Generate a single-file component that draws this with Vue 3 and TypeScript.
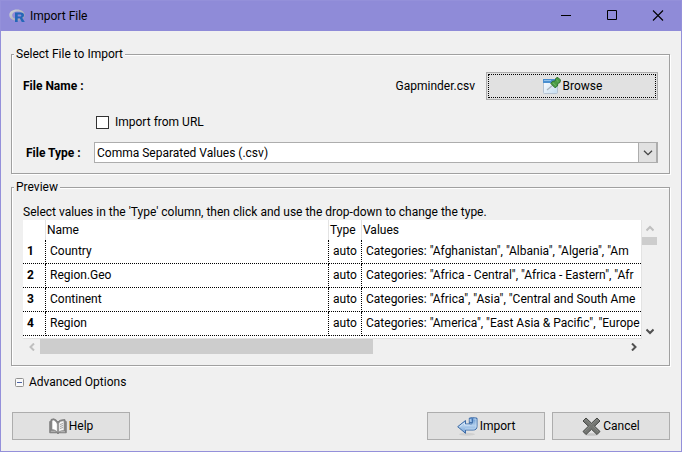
<script setup lang="ts">
import { ref } from 'vue'

interface Variable {
  name: string
  type: string
  values: string
}

const fromUrl = ref(false)
const fileType = ref('Comma Separated Values (.csv)')

const variables: Variable[] = [
  { name: 'Country', type: 'auto', values: 'Categories: "Afghanistan", "Albania", "Algeria", "Am' },
  { name: 'Region.Geo', type: 'auto', values: 'Categories: "Africa - Central", "Africa - Eastern", "Afr' },
  { name: 'Continent', type: 'auto', values: 'Categories: "Africa", "Asia", "Central and South Ame' },
  { name: 'Region', type: 'auto', values: 'Categories: "America", "East Asia & Pacific", "Europe' },
]
</script>

<template>
  <div class="window">
    <header class="titlebar">
      <svg class="logo" width="16" height="14" viewBox="0 0 16 14" aria-hidden="true">
        <defs>
          <linearGradient id="ring" x1="0" y1="0" x2="1" y2="1">
            <stop offset="0" stop-color="#d3d5da" />
            <stop offset="1" stop-color="#9a9da8" />
          </linearGradient>
        </defs>
        <path fill="url(#ring)" fill-rule="evenodd" d="M8 0.5C12.4 0.5 15.6 2.9 15.6 6S12.4 11.7 8 11.7 0.3 9.200 0.300 6 3.600 0.500 8 0.500ZM8.800 2.400C5.500 2.400 3.200 4 3.200 6.200S5.500 9.900 8.800 9.900 14 8.400 14 6.200 12 2.400 8.800 2.400Z" />
        <path fill="#2467b8" fill-rule="evenodd" d="M6 3.500H11.500C14 3.500 15 4.600 15 6.200 15 7.500 14.200 8.300 13.200 8.700L15.800 13H12.800L10.800 9.300H8.700V13H6ZM8.700 5.500V7.400H11C11.900 7.400 12.300 7 12.300 6.400S11.900 5.500 11 5.500Z" />
      </svg>
      <h1>Import File</h1>
      <button class="caption" type="button" aria-label="Minimize">
        <svg width="12" height="12" viewBox="0 0 12 12"><path d="M1 5.500H11" stroke="#000" /></svg>
      </button>
      <button class="caption" type="button" aria-label="Maximize">
        <svg width="12" height="12" viewBox="0 0 12 12"><path d="M1.500 0.500H10.500V9.500H1.500Z" fill="none" stroke="#000" /></svg>
      </button>
      <button class="caption" type="button" aria-label="Close">
        <svg width="12" height="12" viewBox="0 0 12 12"><path d="M1 0.500L11 10.500M11 0.500L1 10.500" stroke="#000" stroke-width="1.100" /></svg>
      </button>
    </header>

    <main>
      <fieldset class="source">
        <legend>Select File to Import</legend>
        <div class="row file-row">
          <strong>File Name :</strong>
          <span class="file-name">Gapminder.csv</span>
          <button class="push browse" type="button">
            <svg width="19" height="18" viewBox="0 0 19 18" aria-hidden="true">
              <defs>
                <linearGradient id="sheet" x1="0" y1="0" x2="1" y2="1">
                  <stop offset="0" stop-color="#ffffff" />
                  <stop offset="1" stop-color="#c3dcf1" />
                </linearGradient>
              </defs>
              <rect x="1.500" y="2.500" width="14" height="14" rx="1" fill="url(#sheet)" stroke="#b4c3d2" />
              <path d="M1 2H16V6H1Z" fill="#4a8fd0" />
              <path d="M2 3.500H9" stroke="#8fc0ea" />
              <path d="M5 13L11 8" stroke="#aab4bb" stroke-width="1.200" />
              <path d="M14 1L16 0.500 18.500 3 18 5.500 15.800 6.500 15.500 9 13 10.800 8.800 6.500 10.500 4.300 13 4Z" fill="#4a9c46" stroke="#2b6e2c" stroke-width="0.900" />
              <path d="M14.500 3L16.500 4.800M11 5.800L13.800 8.500" stroke="#7cc070" stroke-width="0.900" />
            </svg>
            <span>Browse</span>
          </button>
        </div>
        <label class="row url-row">
          <input v-model="fromUrl" type="checkbox" />
          <span>Import from URL</span>
        </label>
        <div class="row type-row">
          <label for="file-type">File Type :</label>
          <div class="combo">
            <select id="file-type" v-model="fileType">
              <option>Comma Separated Values (.csv)</option>
            </select>
            <span class="combo-arrow">
              <svg width="10" height="6" viewBox="0 0 10 6" aria-hidden="true"><path d="M1 0.800L5 4.600 9 0.800" fill="none" stroke="#444" stroke-width="1.300" /></svg>
            </span>
          </div>
        </div>
      </fieldset>

      <fieldset class="preview">
        <legend>Preview</legend>
        <p>Select values in the 'Type' column, then click and use the drop-down to change the type.</p>
        <div class="scroller">
          <div class="viewport">
            <table>
              <colgroup>
                <col class="c-index" />
                <col />
                <col class="c-type" />
                <col class="c-values" />
              </colgroup>
              <thead>
                <tr>
                  <th></th>
                  <th>Name</th>
                  <th>Type</th>
                  <th>Values</th>
                </tr>
              </thead>
              <tbody>
                <tr v-for="(v, i) in variables" :key="v.name">
                  <th scope="row">{{ i + 1 }}</th>
                  <td>{{ v.name }}</td>
                  <td>{{ v.type }}</td>
                  <td>{{ v.values }}</td>
                </tr>
              </tbody>
            </table>
          </div>
          <div class="bar vertical">
            <button type="button" aria-label="Scroll up">
              <svg width="8" height="8" viewBox="0 0 8 8"><path d="M0.500 5.500L4 2 7.500 5.500" fill="none" stroke="#bfbfbf" stroke-width="2" /></svg>
            </button>
            <div class="track"><div class="thumb"></div></div>
            <button type="button" aria-label="Scroll down">
              <svg width="8" height="8" viewBox="0 0 8 8"><path d="M0.500 2.500L4 6 7.500 2.500" fill="none" stroke="#505050" stroke-width="2" /></svg>
            </button>
          </div>
          <div class="bar horizontal">
            <button type="button" aria-label="Scroll left">
              <svg width="8" height="8" viewBox="0 0 8 8"><path d="M6 0.500L2.500 4 6 7.500" fill="none" stroke="#bfbfbf" stroke-width="2" /></svg>
            </button>
            <div class="track"><div class="thumb"></div></div>
            <button type="button" aria-label="Scroll right">
              <svg width="8" height="8" viewBox="0 0 8 8"><path d="M2 0.500L5.500 4 2 7.500" fill="none" stroke="#505050" stroke-width="2" /></svg>
            </button>
          </div>
        </div>
      </fieldset>

      <button class="advanced" type="button" aria-expanded="false">
        <svg width="9" height="9" viewBox="0 0 9 9" aria-hidden="true">
          <rect x="0.500" y="0.500" width="8" height="8" rx="1" fill="#fafafa" stroke="#919191" />
          <path d="M2 4.500H7" stroke="#4b63a7" />
        </svg>
        <span>Advanced Options</span>
      </button>
    </main>

    <footer>
      <button class="push help" type="button">
        <svg width="18" height="17" viewBox="0 0 18 17" aria-hidden="true">
          <path d="M0.700 3.500L2 3V1.500L4.500 0.800C6.500 1.300 8 2.500 9 4 10 2.500 12 1.600 16 1.600V3L17.300 3.500V14.800H10.500L9 15.800 7.500 14.800H0.700Z" fill="#858585" stroke="#777" stroke-width="0.800" />
          <path d="M3 2.500L4.500 2C6.500 3 7.800 4.500 8.300 6V14.300C7.200 12.500 5.500 11.500 3 11.500Z" fill="#fff" stroke="#8a8a8a" stroke-width="0.600" />
          <path d="M9.700 5.500C10.500 3.500 12.500 2.800 15 2.800V12.500C12.500 12.500 10.700 13 9.700 14.300Z" fill="#f4f4f4" stroke="#8a8a8a" stroke-width="0.600" />
          <path d="M11 6.500L14 5.500M11 8.500L14 7.500M11 10.500L14 9.500" stroke="#999" stroke-width="0.900" />
          <path d="M1.800 13.300H6.500M11.500 13.700H16" stroke="#b8b8b8" />
        </svg>
        <span>Help</span>
      </button>
      <button class="push import" type="button">
        <svg width="21" height="19" viewBox="0 0 21 19" aria-hidden="true">
          <defs>
            <linearGradient id="arrow" x1="0" y1="0" x2="0" y2="1">
              <stop offset="0" stop-color="#5f93cf" />
              <stop offset="0.500" stop-color="#b4d0ed" />
              <stop offset="1" stop-color="#6f9fd6" />
            </linearGradient>
          </defs>
          <ellipse cx="10" cy="17.300" rx="8" ry="1.500" fill="#cfcfcf" />
          <path d="M0.700 9.700L8.500 3.500V7H12.300V5.500V1.200C14 0.600 17 0.600 20 1.200V9.500C20 11.800 18.500 13 16.500 13H8.500V16.300Z" fill="url(#arrow)" stroke="#3b6aa6" stroke-linejoin="round" />
          <path d="M2.500 9.700L7.500 5.700V8H13.500" fill="none" stroke="#d8e8f7" stroke-width="0.900" />
          <path d="M12.300 5.500H15.500V1.500M15.500 5.500C15.500 6.800 14.500 7 12.500 7" fill="none" stroke="#3b6aa6" stroke-width="0.900" />
          <path d="M13.200 4.600V2M16.500 2H19V9.500C19 11 18 12 16.500 12H8" fill="none" stroke="#c6dcf2" stroke-width="0.900" />
        </svg>
        <span>Import</span>
      </button>
      <button class="push cancel" type="button">
        <svg width="19" height="19" viewBox="0 0 19 19" aria-hidden="true">
          <ellipse cx="9.500" cy="17.500" rx="7" ry="1.300" fill="#c4c4c4" />
          <path d="M4 1L9.500 6.200 15 1 18 4 12.600 9.200 18 14.500 15 17.500 9.500 12.300 4 17.500 1 14.500 6.400 9.200 1 4Z" fill="#747672" stroke="#454744" stroke-linejoin="round" />
          <path d="M2.500 4L4 2.500 9.500 7.600 15 2.500 16.500 4M7.800 9.200L2.500 14.500M11.200 9.200L16.500 14.500" fill="none" stroke="#8c8e8a" stroke-width="0.800" />
        </svg>
        <span>Cancel</span>
      </button>
    </footer>
  </div>
</template>

<style>
body {
  margin: 0;
}
</style>

<style scoped>
.window {
  box-sizing: border-box;
  min-height: 100vh;
  display: flex;
  flex-direction: column;
  border: 1px solid #9490da;
  background: #f0f0f0;
  color: #000;
  font: 12px/16px Roboto, "Open Sans", sans-serif;
}

button,
select,
input {
  margin: 0;
  padding: 0;
  font: inherit;
  color: inherit;
}

svg {
  display: block;
  flex: none;
}

.titlebar {
  display: flex;
  align-items: center;
  height: 30px;
  padding-left: 8px;
  background: #8f8bd8;
}

h1 {
  flex: 1;
  margin: 0 0 0 5px;
  font: inherit;
}

.caption {
  display: grid;
  place-items: center;
  width: 46px;
  height: 30px;
  border: 0;
  background: none;
}

main {
  flex: 1;
  padding: 15px 11px 0 10px;
}

fieldset {
  min-width: 0;
  margin: 0;
  padding: 10px 11px;
  border: 1px solid #a0a0a0;
  box-shadow: 1px 1px 0 #fff, inset 1px 1px 0 #fff;
}

legend {
  margin-left: -9px;
  padding: 0 2px;
  background: #f0f0f0;
}

.row {
  display: flex;
  align-items: center;
}

.file-row {
  height: 28px;
}

.file-name {
  margin-left: auto;
  margin-right: 11px;
}

.push {
  box-sizing: border-box;
  display: flex;
  align-items: center;
  justify-content: center;
  gap: 2px;
  width: 118px;
  height: 28px;
  border: 1px solid #adadad;
  background: #e1e1e1;
}

.browse {
  width: 172px;
  outline: 1px dotted #000;
  outline-offset: -3px;
}

.url-row {
  height: 22px;
  margin: 11px 0 9px;
  padding-left: 73px;
  gap: 6px;
}

.url-row input {
  appearance: none;
  box-sizing: border-box;
  width: 13px;
  height: 13px;
  border: 1px solid #333;
  background: #fff;
}

.url-row input:checked {
  background: #333;
}

.type-row label {
  width: 71px;
  padding-left: 3px;
  box-sizing: border-box;
  font-weight: bold;
}

.combo {
  flex: 1;
  display: grid;
  grid-template-columns: 1fr 20px;
  height: 21px;
}

.combo select {
  grid-area: 1 / 1 / 2 / 3;
  appearance: none;
  width: 100%;
  height: 21px;
  padding-left: 2px;
  border: 1px solid #adadad;
  border-radius: 0;
  background: #fff;
}

.combo-arrow {
  grid-area: 1 / 2 / 2 / 3;
  display: grid;
  place-items: center;
  border: 1px solid #adadad;
  border-right-width: 2px;
  background: #e1e1e1;
  pointer-events: none;
}

.preview {
  margin-top: 5px;
}

.preview p {
  margin: 0;
  line-height: 15px;
  white-space: nowrap;
}

.scroller {
  display: grid;
  grid-template-columns: minmax(0, 1fr) 16px;
  grid-template-rows: auto 16px;
}

.viewport {
  overflow: hidden;
  padding-bottom: 2px;
  border-right: 1px solid #e3e3e3;
  border-bottom: 1px solid #e3e3e3;
  background: #fff;
}

table {
  width: 100%;
  table-layout: fixed;
  border-collapse: separate;
  border-spacing: 0;
}

.c-index {
  width: 23px;
}

.c-type {
  width: 33px;
}

.c-values {
  width: 279px;
}

th,
td {
  box-sizing: border-box;
  padding: 0 0 0 4px;
  overflow: hidden;
  text-align: left;
  white-space: nowrap;
}

thead th {
  height: 20px;
  padding-left: 1px;
  border-right: 1px solid #e3e3e3;
  font-weight: normal;
}

tbody th,
tbody td {
  height: 24px;
  padding-bottom: 1px;
  border-right: 1px dotted #000;
  border-bottom: 1px dotted #000;
}

th:last-child,
td:last-child {
  border-right: 0;
}

.bar {
  display: flex;
}

.bar button {
  display: grid;
  place-items: center;
  flex: none;
  width: 17px;
  height: 17px;
  border: 0;
  background: none;
}

.vertical {
  flex-direction: column;
}

.horizontal button {
  height: 15px;
}

.vertical button {
  width: 16px;
}

.track {
  flex: 1;
  display: flex;
}

.thumb {
  background: #cdcdcd;
}

.vertical .thumb {
  width: 15px;
  height: 8px;
}

.horizontal .thumb {
  width: 57%;
  height: 15px;
}

.advanced {
  display: flex;
  align-items: center;
  gap: 5px;
  margin: 8px 0 0 4px;
  border: 0;
  background: none;
}

footer {
  display: flex;
  gap: 7px;
  padding: 0 11px 11px;
}

.help {
  margin-right: auto;
}
</style>
